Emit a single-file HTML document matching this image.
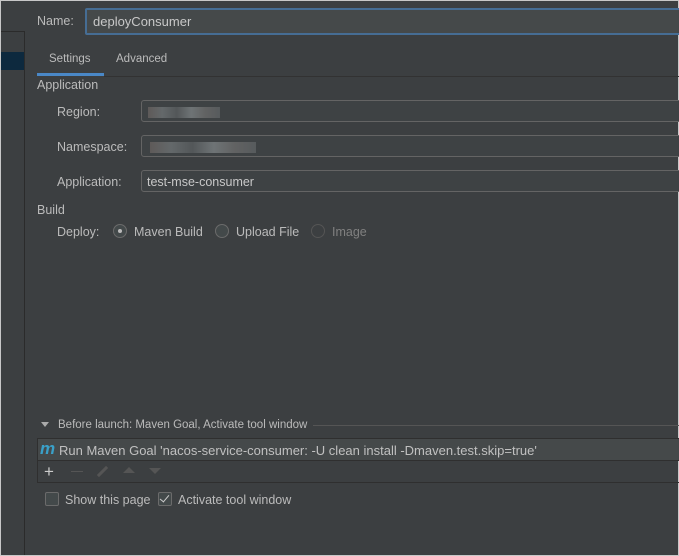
<!DOCTYPE html>
<html><head><style>
body{margin:0;width:679px;height:556px;overflow:hidden;background:#3c3f41;font-family:"Liberation Sans",sans-serif;font-size:12.5px;color:#bbbbbb;position:relative}
.a{position:absolute}
.f{position:absolute;left:141px;width:545px;height:22px;border:1px solid #646464;border-radius:3px;box-sizing:border-box;background:#3e4244}
.r{position:absolute;width:14px;height:14px;border:1px solid #6b6b6b;border-radius:50%;box-sizing:border-box;background:#43494a}
.cb{position:absolute;width:14px;height:14px;border:1px solid #6b6b6b;border-radius:2px;box-sizing:border-box;background:#43494a}
.blur{position:absolute;top:6px;height:11px;background:linear-gradient(90deg,#66605e,#6d7274,#585c5e,#7a8082,#6a6a6a,#5d6163);opacity:.8}
</style></head><body>
<div class="a" style="left:0;top:0;width:679px;height:556px;border:1px solid #c8c8c8;box-sizing:border-box"></div>
<div class="a" style="left:1px;top:31px;width:23px;height:1px;background:#2b2b2b"></div>
<div class="a" style="left:24px;top:31px;width:1px;height:524px;background:#2b2b2b"></div>
<div class="a" style="left:1px;top:52px;width:23px;height:18px;background:#0d293e"></div>
<div class="a" style="left:37px;top:14px">Name:</div>
<div class="a" style="left:85px;top:8px;width:600px;height:27px;border:2px solid #466d94;border-radius:2px;box-sizing:border-box;background:#45494a;padding:4px 0 0 6px;color:#c8c8c8;font-size:13px">deployConsumer</div>
<div class="a" style="left:49px;top:53px;font-size:11.5px">Settings</div>
<div class="a" style="left:116px;top:53px;font-size:11.5px">Advanced</div>
<div class="a" style="left:37px;top:73px;width:67px;height:3px;background:#4a88c7"></div>
<div class="a" style="left:104px;top:76px;width:575px;height:1px;background:#323232"></div>
<div class="a" style="left:37px;top:78px">Application</div>
<div class="a" style="left:57px;top:105px">Region:</div>
<div class="f" style="top:100px"><div class="blur" style="left:6px;width:72px"></div></div>
<div class="a" style="left:57px;top:140px">Namespace:</div>
<div class="f" style="top:135px"><div class="blur" style="left:8px;width:106px"></div></div>
<div class="a" style="left:57px;top:175px">Application:</div>
<div class="f" style="top:170px;padding:4px 0 0 5px;color:#c8c8c8">test-mse-consumer</div>
<div class="a" style="left:37px;top:203px">Build</div>
<div class="a" style="left:57px;top:225px">Deploy:</div>
<div class="r" style="left:113px;top:224px"><div class="a" style="left:4px;top:4px;width:4px;height:4px;border-radius:50%;background:#bbb"></div></div>
<div class="a" style="left:134px;top:225px">Maven Build</div>
<div class="r" style="left:215px;top:224px"></div>
<div class="a" style="left:236px;top:225px">Upload File</div>
<div class="r" style="left:311px;top:224px;border-color:#555;background:#3c3f41"></div>
<div class="a" style="left:332px;top:225px;color:#808080">Image</div>
<div class="a" style="left:41px;top:422px;width:0;height:0;border-left:4px solid transparent;border-right:4px solid transparent;border-top:5px solid #aaa"></div>
<div class="a" style="left:58px;top:419px;font-size:11.5px">Before launch: Maven Goal, Activate tool window</div>
<div class="a" style="left:313px;top:425px;width:366px;height:1px;background:#555"></div>
<div class="a" style="left:37px;top:438px;width:650px;height:45px;border:1px solid #2f2f2f;box-sizing:border-box"></div>
<div class="a" style="left:38px;top:439px;width:641px;height:21px;background:#45494a;border-bottom:1px solid #2f2f2f"></div>
<div class="a" style="left:40px;top:439px;font-size:17px;font-weight:bold;font-style:italic;color:#3aa0c8;font-family:'Liberation Sans',sans-serif">m</div>
<div class="a" style="left:59px;top:443px;color:#c0c0c0;font-size:13px">Run Maven Goal 'nacos-service-consumer: -U clean install -Dmaven.test.skip=true'</div>
<div class="a" style="left:44px;top:462px;font-size:17px;color:#ccc">+</div>
<div class="a" style="left:71px;top:471px;width:12px;height:1px;background:#555"></div>
<div class="a" style="left:96px;top:470px;width:13px;height:3px;background:#555;transform:rotate(-45deg)"></div>
<div class="a" style="left:123px;top:467px;border-left:6px solid transparent;border-right:6px solid transparent;border-bottom:6px solid #555"></div>
<div class="a" style="left:149px;top:468px;border-left:6px solid transparent;border-right:6px solid transparent;border-top:6px solid #555"></div>
<div class="cb" style="left:45px;top:492px"></div>
<div class="a" style="left:65px;top:493px">Show this page</div>
<div class="cb" style="left:158px;top:492px"><div class="a" style="left:3px;top:0px;width:4px;height:8px;border-right:1.5px solid #ccc;border-bottom:1.5px solid #ccc;transform:rotate(40deg)"></div></div>
<div class="a" style="left:178px;top:493px">Activate tool window</div>
</body></html>
